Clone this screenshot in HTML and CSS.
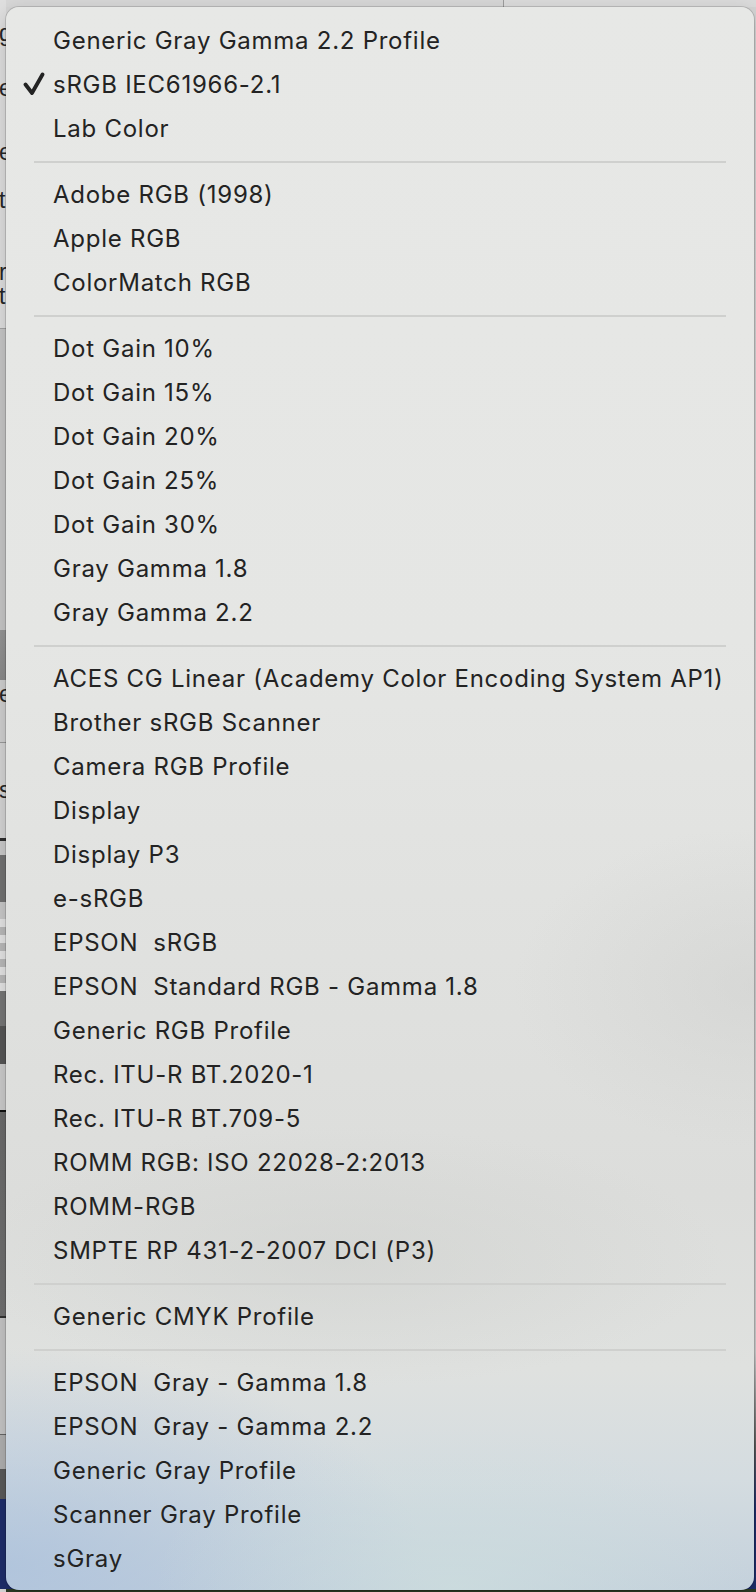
FILE: index.html
```html
<!DOCTYPE html>
<html lang="en">
<head>
<meta charset="utf-8">
<title>Color profile menu</title>
<link rel="stylesheet" href="styles.css">
</head>
<body>
<div class="desk">
  <div class="left-strip">
    <div class="seg seg-a">
      <span class="frag f1">g</span>
      <span class="frag f2">e</span>
      <span class="frag f3">e</span>
      <span class="frag f4">t</span>
      <span class="frag f5">r</span>
      <span class="frag f6">t</span>
    </div>
    <div class="seg seg-b"></div>
    <div class="seg seg-c"></div>
    <div class="seg seg-d"><span class="frag f7">e</span></div>
    <div class="seg seg-e"><span class="frag f8">s</span></div>
    <div class="seg seg-f"></div>
    <div class="seg seg-g"></div>
    <div class="seg seg-h"></div>
    <div class="seg seg-i"></div>
    <div class="seg seg-j"></div>
    <div class="seg seg-k"></div>
    <div class="seg seg-l"></div>
    <div class="seg seg-m"></div>
    <div class="seg seg-n"></div>
    <div class="seg seg-o"></div>
    <div class="seg seg-p"></div>
  </div>
  <div class="main">
    <div class="top-strip"><div class="top-left"></div><div class="top-right"></div></div>
    <div class="main-body"></div>
    <div class="bottom-strip"></div>
  </div>
</div>

<div class="menu" role="menu">
  <div class="item">Generic Gray Gamma 2.2 Profile</div>
  <div class="item checked"><svg class="check" width="22" height="24" viewBox="0 0 22 24"><polyline points="2.5,12.5 9,21 19.5,2.5" fill="none" stroke="#232323" stroke-width="3.8" stroke-linecap="round" stroke-linejoin="round"/></svg>sRGB IEC61966-2.1</div>
  <div class="item">Lab Color</div>
  <div class="sep"></div>
  <div class="item">Adobe RGB (1998)</div>
  <div class="item">Apple RGB</div>
  <div class="item">ColorMatch RGB</div>
  <div class="sep"></div>
  <div class="item">Dot Gain 10%</div>
  <div class="item">Dot Gain 15%</div>
  <div class="item">Dot Gain 20%</div>
  <div class="item">Dot Gain 25%</div>
  <div class="item">Dot Gain 30%</div>
  <div class="item">Gray Gamma 1.8</div>
  <div class="item">Gray Gamma 2.2</div>
  <div class="sep"></div>
  <div class="item">ACES CG Linear (Academy Color Encoding System AP1)</div>
  <div class="item">Brother sRGB Scanner</div>
  <div class="item">Camera RGB Profile</div>
  <div class="item">Display</div>
  <div class="item">Display P3</div>
  <div class="item">e-sRGB</div>
  <div class="item">EPSON&nbsp; sRGB</div>
  <div class="item">EPSON&nbsp; Standard RGB - Gamma 1.8</div>
  <div class="item">Generic RGB Profile</div>
  <div class="item">Rec. ITU-R BT.2020-1</div>
  <div class="item">Rec. ITU-R BT.709-5</div>
  <div class="item">ROMM RGB: ISO 22028-2:2013</div>
  <div class="item">ROMM-RGB</div>
  <div class="item">SMPTE RP 431-2-2007 DCI (P3)</div>
  <div class="sep"></div>
  <div class="item">Generic CMYK Profile</div>
  <div class="sep"></div>
  <div class="item">EPSON&nbsp; Gray - Gamma 1.8</div>
  <div class="item">EPSON&nbsp; Gray - Gamma 2.2</div>
  <div class="item">Generic Gray Profile</div>
  <div class="item">Scanner Gray Profile</div>
  <div class="item">sGray</div>
</div>
</body>
</html>
```

FILE: styles.css
```css
html, body {
  margin: 0;
  padding: 0;
}
body {
  width: 756px;
  height: 1592px;
  overflow: hidden;
  position: relative;
  font-family: Inter, "Noto Sans", "Liberation Sans", sans-serif;
  background: #d8d8d8;
}

/* ---------- background (content behind the menu) ---------- */
.desk {
  display: flex;
  height: 1592px;
}
.left-strip {
  width: 6px;
  flex: none;
  display: flex;
  flex-direction: column;
  overflow: hidden;
}
.seg { flex: none; position: relative; overflow: hidden; }
.seg-a { height: 328px; background: #dedede; border-bottom: 1px solid #a3a3a3; }
.seg-b { height: 301px; background: #c6c6c6; }
.seg-c { height: 50px; background: linear-gradient(#959595, #8a8a8a); }
.seg-d { height: 62px; background: #cfcfcf; border-bottom: 1px solid #9a9a9a; }
.seg-e { height: 95px; background: #d4d4d4; border-bottom: 3px solid #2e2e2e; }
.seg-f { height: 14px; background: #cacaca; }
.seg-g { height: 47px; background: #727272; }
.seg-h { height: 17px; background: #c8c8c8; }
.seg-i {
  height: 72px;
  background-color: #e4e4e4;
  background-image:
    linear-gradient(45deg, #b9b9b9 25%, transparent 25%, transparent 75%, #b9b9b9 75%),
    linear-gradient(45deg, #b9b9b9 25%, transparent 25%, transparent 75%, #b9b9b9 75%);
  background-size: 16px 16px;
  background-position: 0 0, 8px 8px;
}
.seg-j { height: 35px; background: #767676; }
.seg-k { height: 38px; background: #565656; }
.seg-l { height: 46px; background: #cbcbcb; border-bottom: 2px solid #111; }
.seg-m { height: 204px; background: linear-gradient(#6a6a6a, #707070); border-bottom: 2px solid #333; }
.seg-n { height: 116px; background: #c5c5c5; border-bottom: 1px solid #666; }
.seg-o { height: 34px; background: #b0b0b0; }
.seg-p { height: 120px; background: #5a5a5a; border-bottom: 0; }
.seg-p::after {
  content: "";
  display: block;
  margin-top: 30px;
  height: 90px;
  background: #1e2d6a;
}

.frag {
  position: absolute;
  left: -1px;
  font-family: "Liberation Sans", sans-serif;
  font-size: 23px;
  line-height: 1;
  color: #262626;
}
.f1 { top: 22px; }
.f2 { top: 77px; }
.f3 { top: 141px; }
.f4 { top: 189px; }
.f5 { top: 261px; }
.f6 { top: 285px; }
.f7 { top: 3px; }
.f8 { top: 36px; }

.main {
  flex: 1;
  display: flex;
  flex-direction: column;
}
.top-strip {
  height: 7px;
  display: flex;
  background: #d6d6d6;
}
.top-left { width: 497px; border-right: 1px solid #9c9c9c; }
.top-right { flex: 1; background: #dadada; }
.main-body {
  flex: 1;
  background: linear-gradient(#d4d4d4 0%, #cdcdcd 85%, #5a5a5a 91%, #1e2d6a 95%);
}
.bottom-strip {
  height: 3px;
  background: #2c3b25;
}

/* ---------- the popup menu ---------- */
.menu {
  position: absolute;
  left: 6px;
  top: 7px;
  width: 748px;
  height: 1583px;
  box-sizing: border-box;
  padding: 12px 0 9px;
  border-radius: 13px;
  background:
    radial-gradient(ellipse 300px 160px at 60% 1580px, rgba(205, 222, 222, 0.7), rgba(205, 222, 222, 0) 100%),
    radial-gradient(ellipse 420px 220px at 0% 1560px, rgba(170, 192, 220, 0.75), rgba(170, 192, 220, 0) 100%),
    radial-gradient(ellipse 240px 160px at 100% 980px, rgba(204, 205, 203, 0.45), rgba(204, 205, 203, 0) 100%),
    radial-gradient(ellipse 380px 130px at 45% 1250px, rgba(205, 207, 204, 0.5), rgba(205, 207, 204, 0) 100%),
    linear-gradient(180deg, #e7e8e6 0%, #e5e6e4 40%, #e0e1df 60%, #dcdddb 75%, #dfe1df 86%, #d4dce0 93%, #c4d1dc 100%);
  box-shadow: 0 0 0 1px rgba(0, 0, 0, 0.14), 0 6px 18px rgba(0, 0, 0, 0.18);
  display: flex;
  flex-direction: column;
}
.item {
  height: 44px;
  line-height: 44px;
  padding-left: 47px;
  position: relative;
  font-size: 24px;
  color: #232323;
  white-space: nowrap;
  letter-spacing: 0.74px;
}
.check {
  position: absolute;
  left: 17px;
  top: 9px;
}
.sep {
  height: 22px;
  flex: none;
  display: flex;
  align-items: center;
  padding: 0 28px;
}
.sep::before {
  content: "";
  flex: 1;
  height: 2px;
  background: #cfd0ce;
}
```
